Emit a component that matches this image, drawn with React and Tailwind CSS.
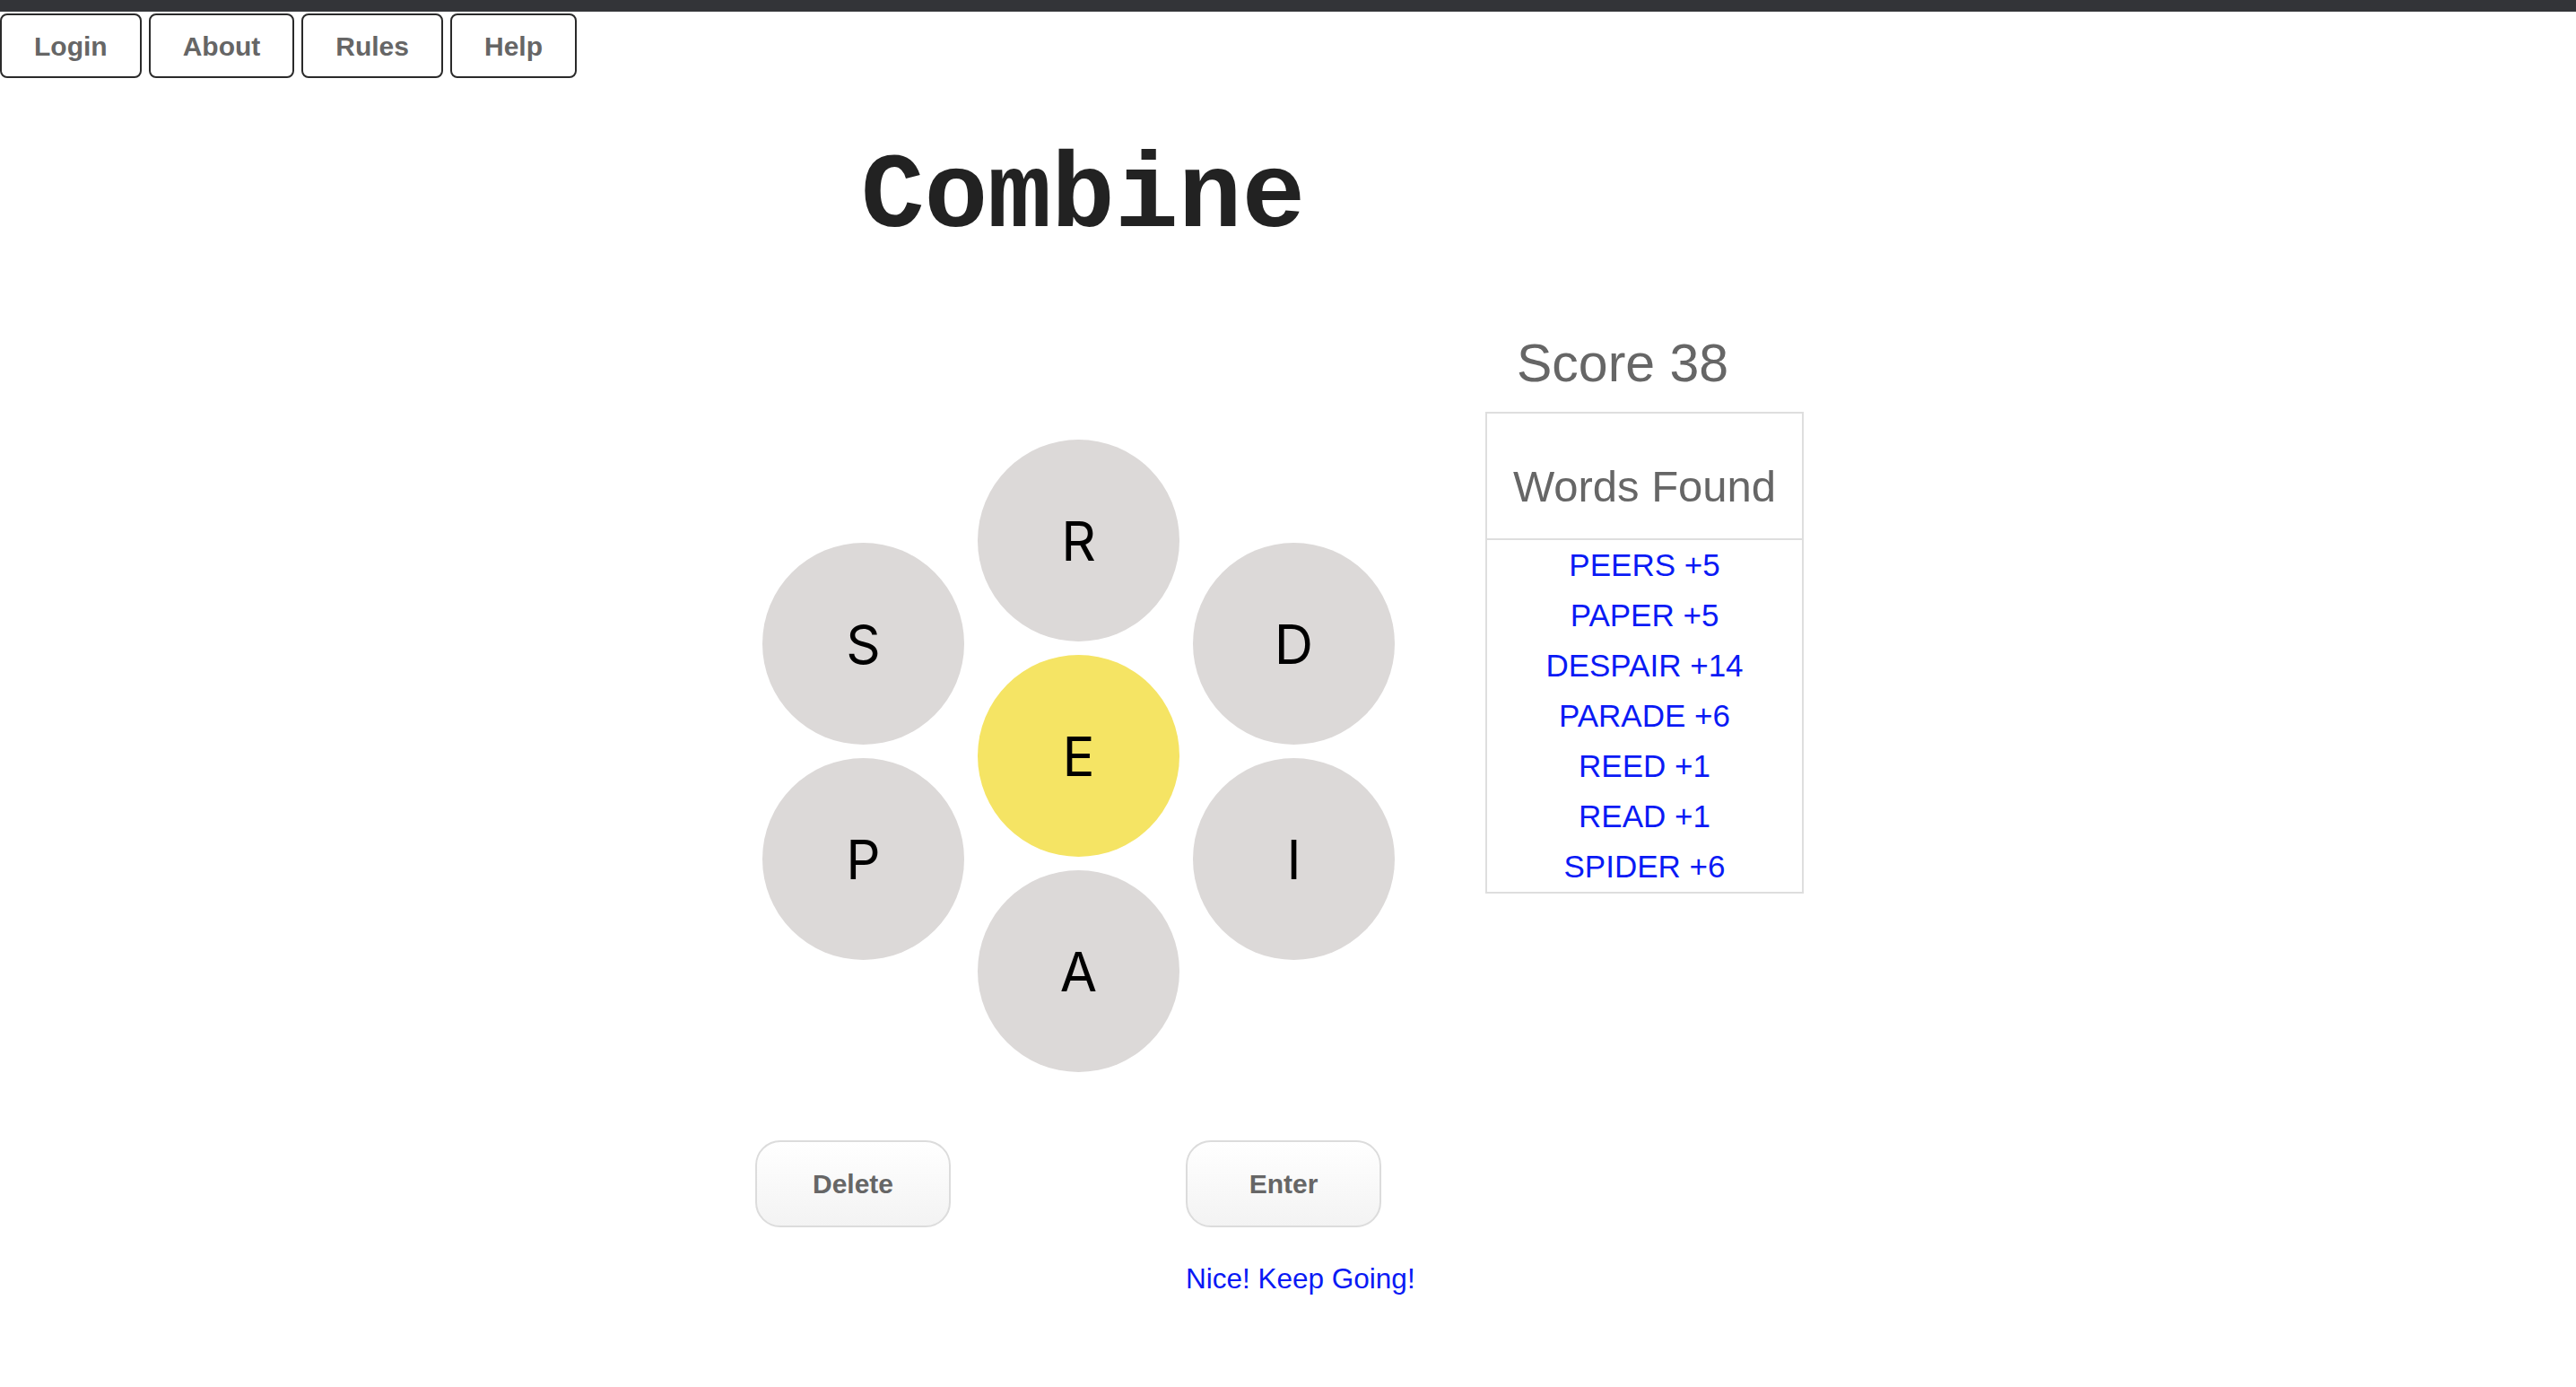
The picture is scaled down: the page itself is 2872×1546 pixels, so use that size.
import React from "react";

const navItems = ["Login", "About", "Rules", "Help"];

const words = [
  ["PEERS", 5],
  ["PAPER", 5],
  ["DESPAIR", 14],
  ["PARADE", 6],
  ["REED", 1],
  ["READ", 1],
  ["SPIDER", 6],
];

const Cell = ({ letter, center }) => (
  <div
    className={`flex items-center justify-center w-[225px] h-[225px] rounded-full text-[60px] text-black ${
      center ? "bg-[#f5e464]" : "bg-[#dcd9d8]"
    }`}
    style={{ fontFamily: "Inter, 'Liberation Sans', sans-serif" }}
  >
    {letter}
  </div>
);

const App = () => {
  return (
    <div className="min-h-screen bg-white" style={{ fontFamily: "'Liberation Sans', Arial, sans-serif" }}>
      <div className="h-[13px] bg-[#333438]" />

      {/* top nav */}
      <div className="flex gap-[8px] mt-[2px]">
        {navItems.map((item) => (
          <button
            key={item}
            className="h-[72px] px-[36px] border-2 border-[#2a2a2a] rounded-[8px] bg-white text-[30px] font-bold text-[#666]"
          >
            {item}
          </button>
        ))}
      </div>

      <div className="flex items-start pl-[842px]">
        {/* game column */}
        <div className="flex flex-col w-[713px]">
          <h1
            className="mt-[75px] pl-[18px] text-center text-[118px] leading-none font-bold text-[#222]"
            style={{ fontFamily: "'Courier New', 'Liberation Mono', monospace" }}
          >
            Combine
          </h1>

          <div className="flex gap-[15px] mt-[210px] ml-[8px]">
            <div className="flex flex-col gap-[15px] mt-[115px]">
              <Cell letter="S" />
              <Cell letter="P" />
            </div>
            <div className="flex flex-col gap-[15px]">
              <Cell letter="R" />
              <Cell letter="E" center />
              <Cell letter="A" />
            </div>
            <div className="flex flex-col gap-[15px] mt-[115px]">
              <Cell letter="D" />
              <Cell letter="I" />
            </div>
          </div>

          <div className="flex justify-between w-[698px] mt-[76px]">
            <button className="w-[218px] h-[97px] rounded-[28px] border-2 border-[#dcdcdc] bg-gradient-to-b from-white to-[#f3f3f3] text-[30px] font-bold text-[#666]">
              Delete
            </button>
            <button className="w-[218px] h-[97px] rounded-[28px] border-2 border-[#dcdcdc] bg-gradient-to-b from-white to-[#f3f3f3] text-[30px] font-bold text-[#666]">
              Enter
            </button>
          </div>

          <div className="mt-[34px] pl-[480px] text-[31.5px] text-[#0a1af5] whitespace-nowrap">Nice! Keep Going!</div>
        </div>

        {/* score column */}
        <div className="flex flex-col ml-[101px] mt-[289px] w-[355px]">
          <div className="pl-[35px] text-[59px] leading-none text-[#666]">Score 38</div>
          <div className="mt-[24px] border-2 border-[#dedede]">
            <div className="pt-[52px] pb-[29px] text-center text-[49px] leading-[58px] text-[#666] border-b-2 border-[#dedede]">
              Words Found
            </div>
            <ul className="text-center">
              {words.map(([word, pts]) => (
                <li key={word} className="text-[35px] leading-[56px] text-[#0a1af5]">
                  {word} +{pts}
                </li>
              ))}
            </ul>
          </div>
        </div>
      </div>
    </div>
  );
};

export default App;
